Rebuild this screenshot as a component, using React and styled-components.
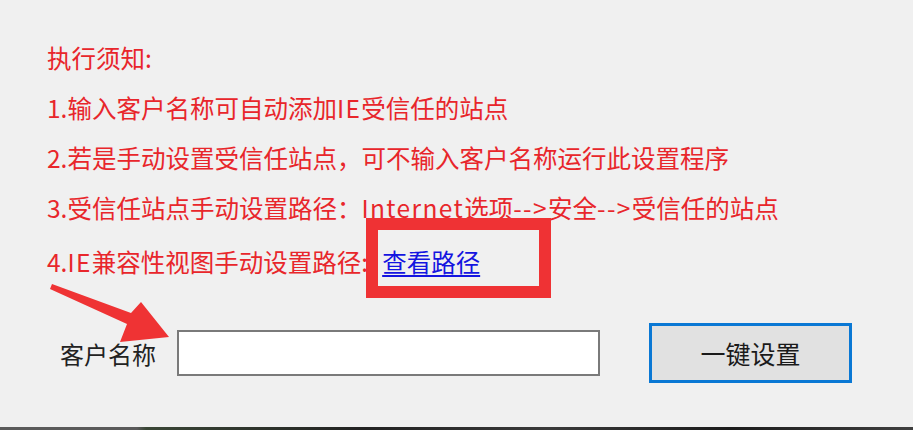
import React from "react";
import styled, { createGlobalStyle } from "styled-components";

const Global = createGlobalStyle`
  html, body { margin: 0; padding: 0; background: #f0f0f0; }
  body { font-family: "Noto Sans CJK SC", "Microsoft YaHei", "Noto Sans", sans-serif; }
`;

const Page = styled.div`
  position: relative;
  width: 913px;
  height: 430px;
  background: #f0f0f0;
  display: flex;
  flex-direction: column;
  overflow: hidden;
`;

const Notice = styled.ul`
  list-style: none;
  margin: 0;
  padding: 33px 0 0 47px;
  display: flex;
  flex-direction: column;
`;

const Line = styled.li`
  height: 50px;
  line-height: 50px;
  font-size: 24.5px;
  color: #e8262b;
  white-space: nowrap;
  margin-top: ${(p) => (p.$extra ? "4px" : "0")};
`;

const Latin = styled.span`
  letter-spacing: 1.4px;
`;

const PathLink = styled.a`
  color: #1414e0;
  text-decoration: underline;
  text-underline-offset: 3px;
  margin-left: 14px;
  cursor: pointer;
`;

const FormRow = styled.div`
  display: flex;
  align-items: center;
  margin-top: 36px;
  padding-left: 60px;
`;

const Label = styled.label`
  font-size: 24px;
  color: #222;
  margin-right: 21px;
  white-space: nowrap;
`;

const Input = styled.input`
  box-sizing: border-box;
  width: 423px;
  height: 46px;
  border: 2px solid #7a7a7a;
  background: #fff;
  outline: none;
  font-size: 20px;
  padding: 0 6px;
`;

const Button = styled.button`
  box-sizing: border-box;
  margin-left: 49px;
  width: 203px;
  height: 60px;
  border: 3px solid #0a78d4;
  background: #e1e1e1;
  font-family: inherit;
  font-size: 25px;
  color: #1a1a1a;
  cursor: pointer;
`;

const BottomEdge = styled.div`
  margin-top: auto;
  height: 3px;
  background: linear-gradient(90deg, #5a5a5a 0%, #5a5a5a 15%, #3a4636 16%, #222 40%, #3a3a3a 60%, #1c1c1c 80%, #3f3f3f 100%);
`;

const HighlightBox = styled.div`
  position: absolute;
  left: 366px;
  top: 218px;
  width: 185px;
  height: 80px;
  box-sizing: border-box;
  border: 12px solid #ef3234;
  pointer-events: none;
`;

const Arrow = styled.svg`
  position: absolute;
  left: 40px;
  top: 275px;
  width: 140px;
  height: 75px;
  pointer-events: none;
`;

export default function App() {
  return (
    <>
      <Global />
      <Page>
        <Notice>
          <Line>执行须知:</Line>
          <Line>1.输入客户名称可自动添加<Latin>IE</Latin>受信任的站点</Line>
          <Line>2.若是手动设置受信任站点，可不输入客户名称运行此设置程序</Line>
          <Line>
            3.受信任站点手动设置路径：<Latin>Internet</Latin>选项<Latin>--&gt;</Latin>安全<Latin>--&gt;</Latin>受信任的站点
          </Line>
          <Line $extra>
            4.<Latin>IE</Latin>兼容性视图手动设置路径:<PathLink>查看路径</PathLink>
          </Line>
        </Notice>
        <FormRow>
          <Label>客户名称</Label>
          <Input type="text" />
          <Button>一键设置</Button>
        </FormRow>
        <BottomEdge />
        <HighlightBox />
        <Arrow viewBox="0 0 140 75">
          <polygon
            points="12,9 91,38 101,27 129,62 80,67 87,49 10,14"
            fill="#ef3334"
          />
        </Arrow>
      </Page>
    </>
  );
}
